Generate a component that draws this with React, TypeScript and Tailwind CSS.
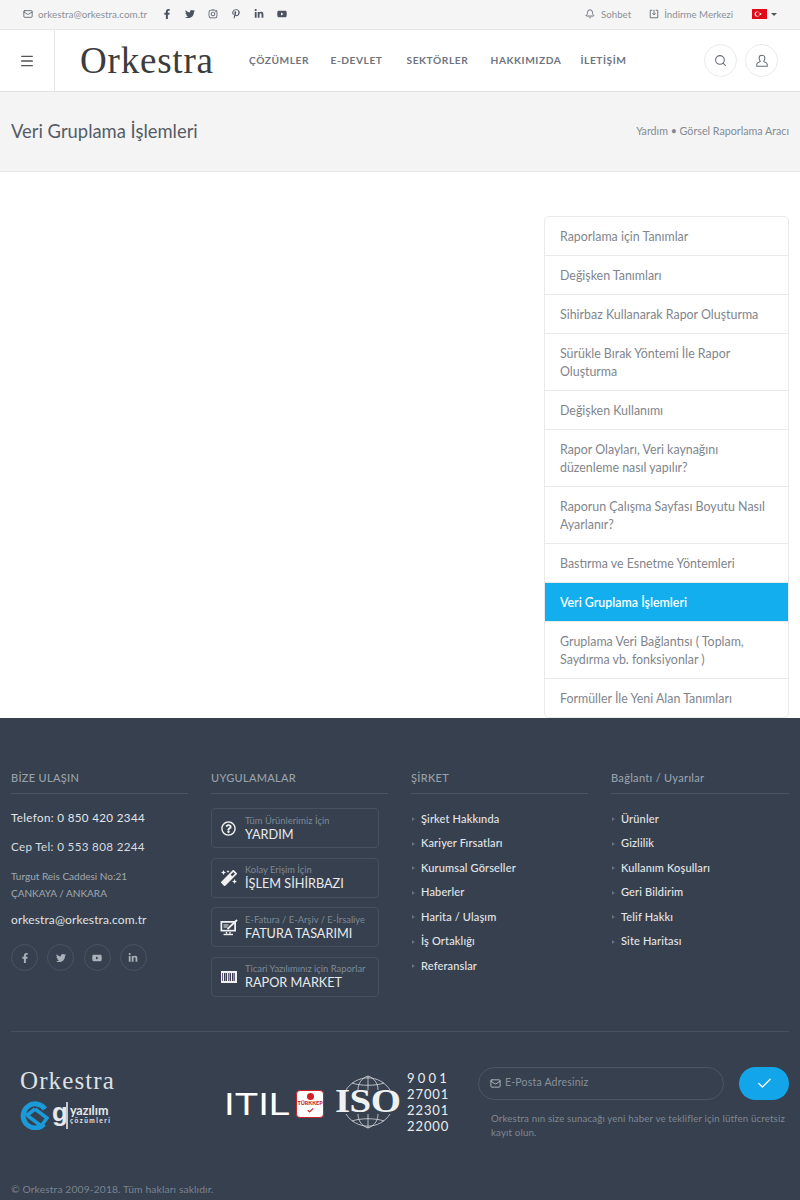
import React from "react";
import { Mail, Bell, Search, Check, Menu } from "lucide-react";
import { FaFacebookF, FaTwitter, FaInstagram, FaPinterestP, FaLinkedinIn, FaYoutube, FaMagic, FaRegQuestionCircle } from "react-icons/fa";

const font = "font-['Lato','Noto_Sans',sans-serif]";

const side: { t: string; active?: boolean }[] = [
  { t: "Raporlama için Tanımlar" },
  { t: "Değişken Tanımları" },
  { t: "Sihirbaz Kullanarak Rapor Oluşturma" },
  { t: "Sürükle Bırak Yöntemi İle Rapor Oluşturma" },
  { t: "Değişken Kullanımı" },
  { t: "Rapor Olayları, Veri kaynağını düzenleme nasıl yapılır?" },
  { t: "Raporun Çalışma Sayfası Boyutu Nasıl Ayarlanır?" },
  { t: "Bastırma ve Esnetme Yöntemleri" },
  { t: "Veri Gruplama İşlemleri", active: true },
  { t: "Gruplama Veri Bağlantısı ( Toplam, Saydırma vb. fonksiyonlar )" },
  { t: "Formüller İle Yeni Alan Tanımları" },
];

function Flag() {
  return (
    <svg width="15" height="10" viewBox="0 0 15 10">
      <rect width="15" height="10" fill="#e30a17" />
      <circle cx="5.2" cy="5" r="2.6" fill="#fff" />
      <circle cx="5.9" cy="5" r="2.1" fill="#e30a17" />
      <circle cx="8.4" cy="5" r="1" fill="#fff" />
    </svg>
  );
}

function Barcode() {
  return (
    <svg width="16" height="12" viewBox="0 0 16 12">
      <rect width="16" height="12" fill="#f1f1f1" />
      {[1, 3, 5, 7, 9, 11, 13].map((x, i) => (
        <rect key={x} x={x} y="2" width={i % 2 ? 1.5 : 1} height="8" fill={i % 3 === 0 ? "#6b5f8a" : "#39404e"} />
      ))}
    </svg>
  );
}

function InvoiceMonitor() {
  return (
    <svg width="18" height="17" viewBox="0 0 18 17" fill="none">
      <rect x="0.5" y="2" width="15.5" height="10.5" fill="#f0f0f0" />
      <rect x="2.2" y="3.8" width="12" height="7" fill="#36404e" />
      <path d="M3.5 6h5M3.5 8h4" stroke="#f0f0f0" strokeWidth="1" />
      <path d="M7.5 10l9.5-9" stroke="#f0f0f0" strokeWidth="1.8" />
      <path d="M6.5 13v1.8M10 13v1.8" stroke="#f0f0f0" strokeWidth="1.4" />
      <path d="M3.5 15.5h9.5" stroke="#f0f0f0" strokeWidth="1.4" />
    </svg>
  );
}

function Heading({ children }: { children: React.ReactNode }) {
  return (
    <div className="h-[24px] border-b border-[#4a5462] text-[11px] font-medium leading-[15px] tracking-[0.3px] text-[#99a1ab]">
      {children}
    </div>
  );
}

function AppBox({ icon, small, big }: { icon: React.ReactNode; small: string; big: string }) {
  return (
    <div className="flex h-[40px] w-[168px] items-center rounded-[4px] border border-[#46505e]">
      <div className="flex w-[33px] shrink-0 justify-center text-[#f0f0f0]">{icon}</div>
      <div className="min-w-0 whitespace-nowrap">
        <div className="text-[9.4px] leading-[11px] text-[#7f8895]">{small}</div>
        <div className="text-[12.7px] leading-[16px] text-[#e8eaec]">{big}</div>
      </div>
    </div>
  );
}

function LinkList({ items }: { items: string[] }) {
  return (
    <ul className="mt-[16px] flex flex-col gap-[6.55px]">
      {items.map((t) => (
        <li key={t} className="flex h-[18px] items-center text-[11px] font-medium tracking-[0.15px] text-[#e4e6e9]">
          <span className="ml-[1px] mr-[6px] h-0 w-0 border-y-[2.5px] border-l-[3px] border-y-transparent border-l-[#667080]" />
          {t}
        </li>
      ))}
    </ul>
  );
}

function Social({ children }: { children: React.ReactNode }) {
  return (
    <div className="flex h-[27px] w-[27px] items-center justify-center rounded-full border border-[#4a5462] text-[10px] text-[#aab0b8]">
      {children}
    </div>
  );
}

export default function App() {
  return (
    <div className={`w-[800px] h-[1200px] overflow-hidden bg-white ${font}`}>
      {/* top bar */}
      <div className="flex h-[30px] items-center justify-between border-b border-[#e6e6e6] bg-[#f5f5f5] pl-[23px] pr-[23px] text-[#777c85]">
        <div className="flex items-center">
          <Mail size={10} className="text-[#555b66]" />
          <span className="ml-[5px] text-[9.9px] text-[#8b9098]">orkestra@orkestra.com.tr</span>
          <div className="ml-[15px] flex items-center gap-[13px] text-[10px] text-[#4c5360]">
            <FaFacebookF />
            <FaTwitter />
            <FaInstagram />
            <FaPinterestP />
            <FaLinkedinIn />
            <FaYoutube />
          </div>
        </div>
        <div className="flex items-center text-[9.7px] text-[#8b9098]">
          <Bell size={10} className="text-[#555b66]" />
          <span className="ml-[6px]">Sohbet</span>
          <svg className="ml-[18px] text-[#555b66]" width="10" height="10" viewBox="0 0 24 24" fill="none" stroke="currentColor" strokeWidth="2">
            <path d="M8 3H3v18h18V3h-5M12 2v12M8 10l4 4 4-4" />
          </svg>
          <span className="ml-[5px]">İndirme Merkezi</span>
          <span className="ml-[19px]"><Flag /></span>
          <span className="ml-[4px] h-0 w-0 border-x-[3px] border-t-[3px] border-x-transparent border-t-[#555]" />
        </div>
      </div>

      {/* header */}
      <div className="flex h-[62px] items-center border-b border-[#e2e2e2] bg-white">
        <div className="flex h-full w-[55px] items-center justify-center border-r border-[#e6e6e6]">
          <Menu size={16} className="text-[#555]" />
        </div>
        <div className="ml-[25px] w-[169px] font-['Liberation_Serif',serif] text-[37px] leading-none tracking-[0.8px] text-[#3c3c3c]">
          Orkestra
        </div>
        <nav className="flex text-[10.2px] font-bold tracking-[0.55px] text-[#6f7580]">
          <span className="w-[81.5px]">ÇÖZÜMLER</span>
          <span className="w-[76px]">E-DEVLET</span>
          <span className="w-[84px]">SEKTÖRLER</span>
          <span className="w-[90px]">HAKKIMIZDA</span>
          <span>İLETİŞİM</span>
        </nav>
        <div className="ml-auto mr-[22px] flex gap-[8px] text-[#666c75]">
          <div className="flex h-[33px] w-[33px] items-center justify-center rounded-full border border-[#eaeaea]">
            <Search size={13} />
          </div>
          <div className="flex h-[33px] w-[33px] items-center justify-center rounded-full border border-[#eaeaea]">
            <svg width="14" height="14" viewBox="0 0 24 24" fill="none" stroke="currentColor" strokeWidth="1.8">
              <path d="M12 2a5 5 0 0 0-5 5c0 3 2 4 2 6 0 1-6 1-6 5v3h18v-3c0-4-6-4-6-5 0-2 2-3 2-6a5 5 0 0 0-5-5z" />
            </svg>
          </div>
        </div>
      </div>

      {/* title */}
      <div className="flex h-[80px] items-center justify-between border-b border-[#e6e6e6] bg-[#f4f4f5] pl-[11px] pr-[11px]">
        <h1 className="text-[18.4px] text-[#555c66]">Veri Gruplama İşlemleri</h1>
        <div className="text-[10.7px] text-[#848a92]">Yardım • Görsel Raporlama Aracı</div>
      </div>

      {/* content */}
      <div className="flex h-[546px] justify-end pr-[11px] pt-[44px]">
        <ul className="h-[502px] w-[245px] overflow-hidden rounded-[5px] border border-[#eaeaea]">
          {side.map((s) => (
            <li
              key={s.t}
              className={`border-b border-[#eaeaea] px-[15px] pb-[9px] pt-[11px] text-[12.4px] leading-[18px] ${
                s.active ? "bg-[#12aeee] font-semibold text-white" : "text-[#7f858d]"
              }`}
            >
              {s.t}
            </li>
          ))}
        </ul>
      </div>

      {/* footer */}
      <div className="h-[482px] bg-[#36404e] px-[11px] pt-[52px]">
        <div className="grid grid-cols-[177px_177px_177px_178px] gap-x-[23px]">
          <div>
            <Heading>BİZE ULAŞIN</Heading>
            <div className="mt-[15px] text-[11.6px] leading-[17px] tracking-[0.35px] text-[#e4e6e9]">Telefon: 0 850 420 2344</div>
            <div className="mt-[12px] text-[11.6px] leading-[17px] tracking-[0.35px] text-[#d9dce0]">Cep Tel: 0 553 808 2244</div>
            <div className="mt-[13px] text-[10px] leading-[17px] text-[#a2a8b1]">
              Turgut Reis Caddesi No:21
              <br />
              ÇANKAYA / ANKARA
            </div>
            <div className="mt-[9px] text-[12px] leading-[17px] tracking-[0.12px] text-[#dfe2e5]">orkestra@orkestra.com.tr</div>
            <div className="mt-[16px] flex gap-[9.3px]">
              <Social><FaFacebookF /></Social>
              <Social><FaTwitter /></Social>
              <Social><FaYoutube /></Social>
              <Social><FaLinkedinIn /></Social>
            </div>
          </div>
          <div>
            <Heading>UYGULAMALAR</Heading>
            <div className="mt-[14px] flex flex-col gap-[9.5px]">
              <AppBox icon={<FaRegQuestionCircle size={15} />} small="Tüm Ürünlerimiz İçin" big="YARDIM" />
              <AppBox icon={<FaMagic size={16} />} small="Kolay Erişim İçin" big="İŞLEM SİHİRBAZI" />
              <AppBox icon={<InvoiceMonitor />} small="E-Fatura / E-Arşiv / E-İrsaliye" big="FATURA TASARIMI" />
              <AppBox icon={<Barcode />} small="Ticari Yazılımınız için Raporlar" big="RAPOR MARKET" />
            </div>
          </div>
          <div>
            <Heading>ŞİRKET</Heading>
            <LinkList items={["Şirket Hakkında", "Kariyer Fırsatları", "Kurumsal Görseller", "Haberler", "Harita / Ulaşım", "İş Ortaklığı", "Referanslar"]} />
          </div>
          <div>
            <Heading>Bağlantı / Uyarılar</Heading>
            <LinkList items={["Ürünler", "Gizlilik", "Kullanım Koşulları", "Geri Bildirim", "Telif Hakkı", "Site Haritası"]} />
          </div>
        </div>

        <div className="mt-[34px] border-t border-[#465060]" />

        <div className="mt-[35px] flex h-[90px] items-start">
          <div className="ml-[9px] w-[204px] shrink-0">
            <div className="mt-[1px] font-['Liberation_Serif',serif] text-[25px] leading-[26px] tracking-[1.1px] text-[#dfe1e4]">Orkestra</div>
            <div className="mt-[7px] flex items-center">
              <svg width="29" height="29" viewBox="0 0 29 29" fill="none">
                <path d="M24 23A12 12 0 1 1 25 8" stroke="#1a9ad9" strokeWidth="5" />
                <path d="M6 15L15 8M8 15L20 24" stroke="#1a9ad9" strokeWidth="3.5" />
                <path d="M15 8L27 17L22 24" stroke="#1a9ad9" strokeWidth="3.5" />
              </svg>
              <span className="ml-[3px] mt-[-6px] font-['Liberation_Sans',sans-serif] text-[26px] font-bold leading-none text-[#e8e8e8]">g</span>
              <span className="ml-[-2px] mr-[2px] h-[27px] w-[2px] bg-[#c4c6ca]" />
              <div className="leading-none text-[#e8e8e8]">
                <div className="text-[12.5px] font-bold leading-[12px]">yazılım</div>
                <div className="text-[6.5px] font-bold leading-[8px] tracking-[1.5px]">çözümleri</div>
              </div>
            </div>
          </div>

          <div className="mt-[21px] flex items-center">
            <span className="inline-block w-[67px] origin-left scale-x-[1.2] font-['Liberation_Sans',sans-serif] text-[32px] leading-none text-white">ITIL</span>
            <div className="ml-[5px] flex h-[28px] w-[28px] flex-col items-center justify-center rounded-[4px] border border-[#c9242c] bg-white">
              <span className="h-[7px] w-[7px] rounded-full bg-[#d0202a]" />
              <span className="text-[5.5px] font-black leading-[7px] text-[#c9242c]">TÜRKKEP</span>
              <Check size={7} strokeWidth={4} className="text-[#c9242c]" />
            </div>
          </div>

          <div className="relative ml-[12px] mt-[8px] flex h-[54px] w-[64px] shrink-0 items-center justify-center">
            <svg className="absolute inset-0" width="64" height="54" viewBox="0 0 64 54" fill="none" stroke="#d8dade" strokeWidth="0.8">
              <path d="M10 15A26 26 0 0 1 54 15M10 39A26 26 0 0 0 54 39" />
              <path d="M22 15C22 8 26 3 32 1C38 3 42 8 42 15M22 39C22 46 26 51 32 53C38 51 42 46 42 39M32 1V15M32 39V53" />
              <path d="M16 8C24 11 40 11 48 8M16 46C24 43 40 43 48 46" />
            </svg>
            <span className="relative scale-x-[1.18] font-['Liberation_Serif',serif] text-[33px] font-bold leading-none tracking-[-0.5px] text-[#eef0f2]">ISO</span>
          </div>
          <div className="ml-[7px] mt-[3px] w-[45px] shrink-0 text-[13px] leading-[16.2px] tracking-[0.9px] text-[#eceef0]">
            <div className="tracking-[3.2px]">9001</div>
            <div>27001</div>
            <div>22301</div>
            <div>22000</div>
          </div>

          <div className="ml-[26px] flex-1">
            <div className="flex items-center gap-[15px]">
              <div className="flex h-[33px] w-[246px] items-center rounded-full border border-[#4c5664] pl-[11px] text-[10.5px] tracking-[0.2px] text-[#8a919b]">
                <Mail size={11} className="mr-[4px] text-[#b6bbc2]" />
                E-Posta Adresiniz
              </div>
              <div className="flex h-[33px] w-[50px] items-center justify-center rounded-full bg-[#12a5ea]">
                <Check size={17} strokeWidth={1.8} className="text-white" />
              </div>
            </div>
            <p className="ml-[13px] mt-[11px] w-[298px] text-[9.7px] leading-[14px] tracking-[0.15px] text-[#808893]">
              Orkestra nın size sunacağı yeni haber ve teklifler için lütfen ücretsiz kayıt olun.
            </p>
          </div>
        </div>

        <div className="mt-[25px] text-[10.35px] tracking-[0.1px] text-[#7b838e]">© Orkestra 2009-2018. Tüm hakları saklıdır.</div>
      </div>
    </div>
  );
}
